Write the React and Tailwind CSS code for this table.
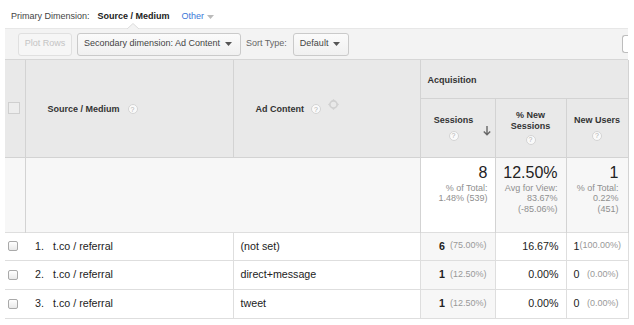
import React from 'react';

const rows = [
  { n: '1.', src: 't.co / referral', ad: '(not set)', s: '6', sp: '(75.00%)', ns: '16.67%', nu: '1', nup: '(100.00%)' },
  { n: '2.', src: 't.co / referral', ad: 'direct+message', s: '1', sp: '(12.50%)', ns: '0.00%', nu: '0', nup: '(0.00%)' },
  { n: '3.', src: 't.co / referral', ad: 'tweet', s: '1', sp: '(12.50%)', ns: '0.00%', nu: '0', nup: '(0.00%)' },
];

function Help() {
  return (
    <span className="inline-flex items-center justify-center w-[10px] h-[10px] rounded-full bg-[#fafafa] border border-[#d4d4d4] text-[7px] leading-none text-[#b0b0b0] font-normal">
      ?
    </span>
  );
}

function Caret() {
  return (
    <svg width="7" height="4" viewBox="0 0 7 4" className="shrink-0">
      <path d="M0 0 L7 0 L3.5 4 Z" fill="#555" />
    </svg>
  );
}

function MoveIcon() {
  return (
    <svg width="11" height="11" viewBox="0 0 11 11" className="-mt-[9px]">
      <circle cx="5.5" cy="5.5" r="3.6" fill="none" stroke="#d0d0d0" strokeWidth="1.6" />
      <path d="M5.5 0 L7 1.6 L4 1.6 Z M5.5 11 L7 9.4 L4 9.4 Z M0 5.5 L1.6 4 L1.6 7 Z M11 5.5 L9.4 4 L9.4 7 Z" fill="#d0d0d0" />
    </svg>
  );
}

function Check({ head }) {
  if (head) {
    return <span className="block w-[12px] h-[12px] border border-[#cfcfcf] bg-[#ededed]" />;
  }
  return (
    <span className="block w-[10px] h-[10px] rounded-[2px] border border-[#a9a9a9] bg-gradient-to-b from-white to-[#e9e9e9]" />
  );
}

export default function App() {
  return (
    <div className="w-[634px] h-[325px] bg-white overflow-hidden font-['Liberation_Sans',Arial,sans-serif] text-[#333]">
      <div className="h-[28px] pt-[11px] pl-[11px] flex items-start text-[9px] leading-[11px]">
        <span className="text-[#444]">Primary Dimension:</span>
        <span className="ml-[8px] font-bold text-[#222]">Source / Medium</span>
        <span className="ml-[12px] text-[#3a78d8]">Other</span>
        <svg width="7" height="4" viewBox="0 0 7 4" className="ml-[3px] mt-[4px]">
          <path d="M0 0 L7 0 L3.5 4 Z" fill="#bbb" />
        </svg>
      </div>

      <div className="relative ml-[5px] w-[623px] h-[32px] bg-[#f3f3f3] border-t border-[#e7e7e7] border-b border-b-[#d6d6d6] flex items-center text-[9px] text-[#444]">
        <svg width="12" height="6" viewBox="0 0 12 6" className="absolute left-[122px] -top-[6px]">
          <path d="M0 6 L6 0.5 L12 6" fill="#f3f3f3" stroke="#dcdcdc" strokeWidth="1" />
        </svg>
        <div className="ml-[13px] w-[54px] h-[23px] flex items-center justify-center rounded-[3px] border border-[#e0e0e0] bg-[#f6f6f6] text-[#c4c4c4]">
          Plot Rows
        </div>
        <div className="ml-[5px] w-[164px] h-[23px] flex items-center justify-between pl-[6px] pr-[8px] rounded-[3px] border border-[#cacaca] bg-gradient-to-b from-[#fbfbfb] to-[#f0f0f0]">
          <span>Secondary dimension: Ad Content</span>
          <Caret />
        </div>
        <span className="ml-[5px] text-[#666]">Sort Type:</span>
        <div className="ml-[6px] w-[56px] h-[23px] flex items-center justify-between pl-[6px] pr-[8px] rounded-[3px] border border-[#cacaca] bg-gradient-to-b from-[#fbfbfb] to-[#f0f0f0]">
          <span>Default</span>
          <Caret />
        </div>
        <div className="ml-auto w-[6px] h-[18px] rounded-l-[3px] border-l border-t border-b border-[#bdbdbd] bg-white" />
      </div>

      <table className="ml-[5px] w-[623px] table-fixed border-collapse text-[#333]">
        <colgroup>
          <col className="w-[20px]" />
          <col className="w-[208px]" />
          <col className="w-[187px]" />
          <col className="w-[75px]" />
          <col className="w-[71px]" />
          <col className="w-[62px]" />
        </colgroup>
        <thead className="bg-[#e9e9e9] text-[9px] font-bold text-[#333]">
          <tr className="h-[38px]">
            <th rowSpan={2} className="p-0 pl-[3px] border-r border-[#d3d3d3] align-middle">
              <Check head />
            </th>
            <th rowSpan={2} className="p-0 pl-[22px] border-r border-[#d3d3d3] text-left align-middle">
              <div className="flex items-center gap-[8px] pt-[2px]">
                <span>Source / Medium</span>
                <Help />
              </div>
            </th>
            <th rowSpan={2} className="p-0 pl-[22px] border-r border-[#d3d3d3] text-left align-middle">
              <div className="flex items-center gap-[7px] pt-[2px]">
                <span>Ad Content</span>
                <Help />
                <MoveIcon />
              </div>
            </th>
            <th colSpan={3} className="p-0 pl-[7px] pt-[3px] border-b border-r border-[#d3d3d3] text-left align-middle">
              Acquisition
            </th>
          </tr>
          <tr className="h-[59px]">
            <th className="p-0 border-r border-[#d3d3d3] align-middle">
              <div className="flex items-center">
                <div className="flex-1 flex flex-col items-center gap-[3px] pl-[4px]">
                  <span>Sessions</span>
                  <Help />
                </div>
                <svg width="8" height="10" viewBox="0 0 8 10" className="mr-[4px] mt-[6px]">
                  <path d="M4 0 V8.5 M0.8 5.5 L4 8.8 L7.2 5.5" fill="none" stroke="#666" strokeWidth="1.4" />
                </svg>
              </div>
            </th>
            <th className="p-0 border-r border-[#d3d3d3] align-middle">
              <div className="flex flex-col items-center leading-[11px]">
                <span>% New</span>
                <span>Sessions</span>
                <span className="mt-[2px]"><Help /></span>
              </div>
            </th>
            <th className="p-0 border-r border-[#d3d3d3] align-middle">
              <div className="flex flex-col items-center gap-[3px]">
                <span>New Users</span>
                <Help />
              </div>
            </th>
          </tr>
        </thead>
        <tbody>
          <tr className="h-[75px] text-[#222]">
            <td className="p-0 bg-[#f7f7f7] border-t border-r border-[#d3d3d3]" />
            <td colSpan={2} className="p-0 bg-[#f7f7f7] border-t border-r border-[#d3d3d3]" />
            <td className="p-0 pt-[6px] pr-[7px] bg-white border-t border-r border-[#d3d3d3] align-top text-right">
              <div className="text-[16px] leading-[18px]">8</div>
              <div className="mt-[1px] text-[9px] leading-[10.5px] text-[#8f8f8f]">
                % of Total:<br />1.48% (539)
              </div>
            </td>
            <td className="p-0 pt-[6px] pr-[8px] bg-[#f7f7f7] border-t border-r border-[#d3d3d3] align-top text-right">
              <div className="text-[16px] leading-[18px]">12.50%</div>
              <div className="mt-[1px] text-[9px] leading-[10.5px] text-[#8f8f8f]">
                Avg for View:<br />83.67%<br />(-85.06%)
              </div>
            </td>
            <td className="p-0 pt-[6px] pr-[9px] bg-[#f7f7f7] border-t border-r border-[#d3d3d3] align-top text-right">
              <div className="text-[16px] leading-[18px]">1</div>
              <div className="mt-[1px] text-[9px] leading-[10.5px] text-[#8f8f8f]">
                % of Total:<br />0.22%<br />(451)
              </div>
            </td>
          </tr>
          {rows.map((r, i) => (
            <tr key={r.n} className={(i === 0 ? 'h-[28px]' : 'h-[29px]') + ' text-[10.7px] text-[#222]'}>
              <td className="p-0 pl-[3px] border-t border-b border-[#dedede] align-middle">
                <Check />
              </td>
              <td className="p-0 border-t border-b border-r border-[#dedede] align-middle">
                <div className="flex items-center">
                  <span className="pl-[10px] w-[28px]">{r.n}</span>
                  <span>{r.src}</span>
                </div>
              </td>
              <td className="p-0 pl-[7px] border-t border-b border-r border-[#dedede] align-middle">{r.ad}</td>
              <td className="p-0 pr-[8px] bg-[#f7f7f7] border-t border-b border-r border-[#dedede] align-middle">
                <div className="flex items-center justify-end gap-[5px]">
                  <span className="font-bold">{r.s}</span>
                  <span className="text-[9px] text-[#999]">{r.sp}</span>
                </div>
              </td>
              <td className="p-0 pr-[7px] border-t border-b border-r border-[#dedede] align-middle text-right">{r.ns}</td>
              <td className="p-0 pl-[7px] pr-[9px] border-t border-b border-r border-[#dedede] align-middle">
                <div className="flex items-center justify-between">
                  <span>{r.nu}</span>
                  <span className="text-[9px] text-[#999]">{r.nup}</span>
                </div>
              </td>
            </tr>
          ))}
        </tbody>
      </table>
    </div>
  );
}
